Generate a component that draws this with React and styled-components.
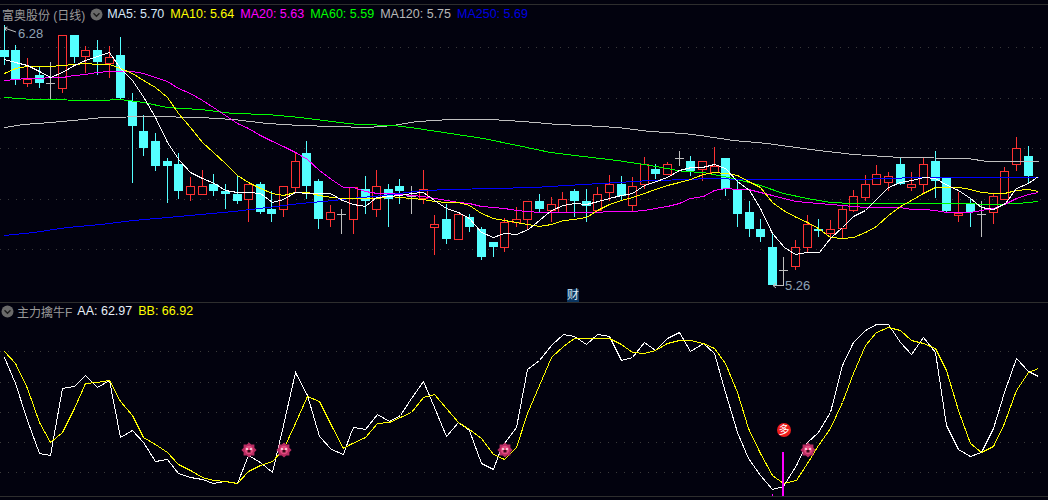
import React from "react";
import styled, { createGlobalStyle } from "styled-components";

const RED = "#ff3232";
const CYAN = "#54ffff";
const GRAY = "#c0c0c0";

// top, bottom, high, low, kind (r red, c cyan, g doji)
const candles = [
  [50, 57, 25, 65, "c"], [50, 79, 45, 85, "c"], [79, 83, 58, 87, "r"], [75, 83, 66, 88, "c"],
  [83, 83, 62, 100, "g"], [35, 88, 35, 93, "r"], [35, 57, 35, 63, "c"], [50, 56, 46, 73, "r"],
  [50, 62, 40, 75, "c"], [57, 63, 46, 78, "r"], [55, 98, 37, 100, "c"], [101, 126, 93, 183, "c"],
  [131, 148, 115, 156, "c"], [141, 166, 133, 171, "c"], [161, 166, 158, 203, "c"], [164, 191, 153, 199, "c"],
  [186, 194, 177, 201, "r"], [186, 194, 170, 195, "r"], [184, 191, 174, 196, "c"], [191, 194, 184, 209, "c"],
  [194, 201, 175, 204, "c"], [184, 199, 184, 222, "r"], [184, 212, 182, 214, "c"], [209, 214, 191, 222, "c"],
  [186, 209, 186, 217, "r"], [161, 187, 153, 192, "r"], [153, 186, 141, 199, "c"], [181, 219, 179, 229, "c"],
  [212, 219, 205, 227, "r"], [214, 214, 209, 234, "g"], [187, 219, 187, 234, "r"], [189, 201, 176, 214, "c"],
  [186, 209, 170, 217, "r"], [189, 199, 184, 227, "c"], [186, 191, 179, 204, "c"], [196, 196, 186, 214, "g"],
  [189, 198, 170, 204, "r"], [224, 227, 215, 255, "r"], [219, 239, 204, 244, "c"], [214, 239, 214, 239, "r"],
  [217, 227, 214, 232, "c"], [229, 257, 227, 260, "c"], [242, 247, 242, 257, "c"], [222, 247, 218, 252, "r"],
  [219, 222, 207, 227, "r"], [201, 219, 201, 229, "r"], [201, 209, 194, 212, "c"], [204, 210, 197, 222, "r"],
  [199, 212, 192, 212, "r"], [191, 201, 189, 217, "c"], [201, 206, 189, 222, "c"], [194, 210, 187, 210, "r"],
  [184, 192, 175, 201, "r"], [184, 196, 176, 201, "c"], [186, 205, 177, 212, "r"], [164, 184, 157, 189, "r"],
  [169, 174, 164, 179, "c"], [164, 174, 162, 174, "r"], [158, 158, 151, 166, "g"], [161, 171, 156, 176, "c"],
  [161, 169, 161, 181, "r"], [166, 172, 147, 172, "r"], [158, 189, 158, 196, "c"], [189, 214, 179, 227, "c"],
  [212, 229, 201, 237, "c"], [229, 237, 219, 242, "c"], [247, 285, 234, 285, "c"], [270, 270, 257, 285, "g"],
  [247, 266, 240, 270, "r"], [224, 247, 215, 252, "r"], [229, 231, 219, 237, "c"], [229, 233, 220, 240, "r"],
  [209, 228, 205, 238, "r"], [196, 210, 190, 212, "r"], [184, 197, 175, 201, "r"], [174, 184, 165, 184, "r"],
  [176, 182, 172, 191, "r"], [164, 184, 157, 185, "c"], [184, 187, 172, 191, "r"], [164, 184, 158, 193, "r"],
  [161, 181, 151, 198, "c"], [177, 211, 177, 213, "c"], [213, 215, 192, 222, "r"], [204, 212, 199, 227, "c"],
  [214, 214, 201, 237, "g"], [196, 212, 193, 224, "r"], [171, 199, 167, 199, "r"], [148, 164, 137, 171, "r"],
  [156, 176, 146, 183, "c"],
];

const ma5 = "4,59 15,62 27,65 39,71 50,77 62,72 74,65 85,60 97,56 109,52 120,68 132,80 144,98 155,117 167,142 179,160 190,172 202,178 214,183 225,190 237,192 248,192 260,193 272,202 283,199 295,192 307,193 318,193 330,193 342,200 353,204 365,206 376,197 388,196 400,195 411,193 423,192 434,200 446,208 458,212 469,218 481,232 493,237 504,233 516,234 528,229 539,220 551,210 563,205 574,203 586,204 598,201 609,198 621,195 632,193 644,185 656,181 667,177 679,170 691,167 702,167 714,164 725,168 737,181 749,190 760,208 772,233 784,247 795,254 807,252 819,252 830,238 842,227 853,216 865,210 877,198 888,187 900,182 912,180 923,177 935,178 947,185 958,190 970,198 981,207 993,209 1005,203 1016,188 1028,183 1038,176";
const ma10 = "4,73 15,68 27,66 39,66 50,66 62,65 74,64 85,63 97,64 109,64 120,68 132,73 143,80 155,87 167,97 178,113 190,127 202,142 213,152 225,163 237,175 248,182 260,188 272,193 283,195 295,192 307,192 319,195 331,197 343,198 353,198 365,198 377,198 389,196 400,197 411,198 423,199 434,201 446,202 458,202 469,205 481,213 493,218 504,220 516,222 527,224 539,226 551,224 563,220 574,219 586,217 597,210 609,204 621,200 632,197 644,193 655,189 667,185 679,182 690,179 703,174 714,172 725,173 737,175 748,181 760,187 772,202 783,210 796,217 807,222 818,228 830,237 842,238 853,237 865,232 876,226 888,215 900,206 911,200 923,193 935,187 946,187 958,187 970,189 981,192 993,193 1004,193 1016,190 1028,189 1038,191";
const ma20 = "4,80 15,79 27,78 39,78 50,77 62,77 74,75 85,74 97,72 109,71 120,71 132,71 143,73 155,77 167,81 178,88 190,93 202,100 213,107 225,115 237,123 248,128 260,135 272,141 283,146 295,152 307,159 319,170 331,179 343,187 353,187 365,191 377,193 389,193 400,194 411,195 423,196 434,198 446,200 458,202 469,203 481,206 493,207 504,208 516,210 527,211 539,212 551,212 563,212 574,212 586,212 597,212 609,211 621,211 632,211 644,210 655,208 667,206 679,203 690,198 703,196 714,190 725,188 737,189 748,189 760,192 772,195 783,198 796,201 807,202 818,203 830,204 842,205 853,206 865,207 876,207 888,207 900,207 911,209 923,209 935,210 946,212 958,212 970,212 981,210 993,208 1004,204 1016,198 1028,194 1038,192";
const ma60 = "4,97 33,99 100,100 120,99 143,102 167,107 200,109 233,113 267,114 300,117 347,123 360,124 393,125 417,128 450,133 483,138 517,145 550,152 583,156 617,160 650,165 683,171 703,172 733,178 760,185 783,193 807,198 830,202 853,203 900,203 933,203 958,203 993,204 1017,203 1038,201";
const ma120 = "4,127 23,124 50,122 83,119 103,117 150,116 200,117 233,119 267,123 300,125 333,126 367,127 393,125 417,121 450,119 490,119 523,121 557,124 583,125 617,127 650,131 683,133 700,135 733,140 767,143 810,149 853,154 900,157 967,158 987,161 1038,161";
const ma250 = "4,235 33,232 67,227 100,224 133,220 167,217 200,214 233,211 267,207 300,203 333,200 350,198 383,195 423,190 450,189 493,188 533,187 583,184 617,182 650,180 693,179 703,178 753,179 857,179 917,177 1038,177";

const aa = "4,357 15,383 27,420 39,453 50,455 62,388 74,386 85,375 97,387 109,380 120,437 132,430 143,442 155,461 167,459 178,473 190,477 202,479 213,483 225,481 237,483 248,455 260,462 272,472 283,425 295,372 307,395 319,436 331,449 343,454 350,434 353,427 365,429 377,414 389,421 400,415 411,398 423,381 434,407 446,436 458,422 469,430 481,463 493,469 498,455 504,443 516,427 527,369 539,360 551,345 563,334 574,336 586,344 597,334 609,336 621,360 632,357 644,342 655,350 667,338 679,332 690,351 703,343 714,353 725,392 737,432 748,458 760,475 772,489 783,486 796,465 807,442 818,432 830,412 842,365 853,342 865,330 876,324 888,324 900,342 911,354 923,337 935,352 946,425 958,449 970,456 981,452 993,428 1004,392 1016,358 1028,371 1038,376";
const bb = "4,351 15,363 27,388 39,422 50,442 62,432 74,408 85,383 97,382 109,380 120,401 132,415 143,437 155,444 167,452 178,464 190,470 202,477 213,480 225,481 237,483 248,471 260,465 272,461 283,449 295,423 307,396 319,401 331,425 343,448 350,444 365,437 377,423 389,422 400,417 411,412 423,397 434,394 446,408 458,422 469,429 481,438 493,454 504,459 516,447 527,413 539,385 551,357 563,346 574,338 586,338 597,338 609,338 621,344 632,352 644,353 655,350 667,343 679,340 690,340 703,343 714,348 725,363 737,392 748,428 760,453 772,475 783,483 796,480 807,463 818,445 830,428 842,402 853,373 865,345 876,332 888,327 900,330 911,340 923,343 935,348 946,370 958,410 970,443 981,452 993,446 1004,423 1016,390 1028,372 1038,368";

const priceGrid = [47, 98, 148, 199, 249];
const indicatorGrid = [351, 382, 412, 442, 472];
const flowers = [249, 284, 505, 808];

const GlobalStyle = createGlobalStyle`
  html, body {
    margin: 0;
    padding: 0;
    background: #02020e;
  }
`;

const Screen = styled.div`
  width: 1048px;
  height: 500px;
  padding-top: 4px;
  box-sizing: border-box;
  background: #02020e;
  display: flex;
  flex-direction: column;
  overflow: hidden;
  font-family: "Liberation Sans", "Noto Sans CJK SC", sans-serif;
`;

const Panel = styled.section`
  position: relative;
  height: ${(p) => p.$height}px;
  flex: none;
  display: flex;
  flex-direction: column;
  box-sizing: border-box;
  border-top: 1px solid #2e2e2e;
`;

const Footer = styled.div`
  flex: 1;
  border-top: 1px solid #2e2e2e;
`;

const Legend = styled.div`
  height: ${(p) => p.$height}px;
  flex: none;
  display: flex;
  align-items: center;
  white-space: nowrap;
  font-size: 12.5px;
`;

const Title = styled.span`
  color: #9a9a9a;
  font-size: 12px;
  margin: ${(p) => p.$margin};
`;

const Reading = styled.span`
  color: ${(p) => p.$color};
  margin-right: 6px;
`;

const Toggle = styled.svg`
  width: 13px;
  height: 13px;
  flex: none;
  margin: ${(p) => p.$margin};
`;

const Chart = styled.svg`
  display: block;
  flex: none;
  width: 1048px;
  height: ${(p) => p.$height}px;
`;

const FinanceTag = styled.span`
  position: absolute;
  left: 567px;
  bottom: 0;
  width: 12px;
  height: 13px;
  background: #0a3560;
  color: #d8e4f0;
  font-size: 12px;
  line-height: 13px;
  text-align: center;
`;

const PriceLabel = styled.text`
  fill: #8fa3b5;
  font-family: "Liberation Sans", sans-serif;
  font-size: 13px;
`;

const BadgeGlyph = styled.text`
  fill: #ffffff;
  font-family: "Noto Sans CJK SC", sans-serif;
  font-size: 11px;
  text-anchor: middle;
`;

function ToggleIcon({ margin }) {
  return (
    <Toggle $margin={margin} viewBox="0 0 13 13">
      <circle cx="6.5" cy="6.5" r="6" fill="#6a6a6a" />
      <path d="M3.5 5.2 L6.5 8.2 L9.5 5.2" fill="none" stroke="#1c1c1c" strokeWidth="1.4" />
    </Toggle>
  );
}

function GridLines({ rows }) {
  return rows.map((y) => (
    <line
      key={y}
      x1="0"
      x2="1048"
      y1={y + 0.5}
      y2={y + 0.5}
      stroke="#3a3a3a"
      strokeDasharray="1 7"
    />
  ));
}

function Candle({ index, data }) {
  const [top, bottom, high, low, kind] = data;
  const x = Math.round(3.8 + 11.636 * index);
  if (kind === "g") {
    return (
      <g stroke={GRAY} shapeRendering="crispEdges">
        <line x1={x + 0.5} x2={x + 0.5} y1={high} y2={low} />
        <line x1={x - 4} x2={x + 5} y1={top + 0.5} y2={top + 0.5} />
      </g>
    );
  }
  if (kind === "r") {
    return (
      <g stroke={RED} fill="none" shapeRendering="crispEdges">
        <line x1={x + 0.5} x2={x + 0.5} y1={high} y2={top} />
        <line x1={x + 0.5} x2={x + 0.5} y1={bottom} y2={low} />
        <rect x={x - 3.5} y={top + 0.5} width="8" height={bottom - top} />
      </g>
    );
  }
  return (
    <g shapeRendering="crispEdges">
      <line x1={x + 0.5} x2={x + 0.5} y1={high} y2={low} stroke={CYAN} />
      <rect x={x - 4} y={top} width="9" height={bottom - top} fill={CYAN} />
    </g>
  );
}

function Trace({ points, color }) {
  return (
    <polyline
      points={points}
      transform="translate(0.5 0.5)"
      fill="none"
      stroke={color}
      strokeWidth="1"
      shapeRendering="crispEdges"
    />
  );
}

function Flower({ x, y }) {
  const spikes = [];
  for (let i = 0; i < 16; i++) {
    const r = i % 2 === 0 ? 7.6 : 5.8;
    const a = (Math.PI * i) / 8;
    spikes.push(`${(x + r * Math.sin(a)).toFixed(1)},${(y - r * Math.cos(a)).toFixed(1)}`);
  }
  return (
    <g>
      <polygon points={spikes.join(" ")} fill="#b82c62" />
      <circle cx={x} cy={y} r="4.2" fill="#e24c80" />
      <rect x={x - 3} y={y - 2} width="2" height="2" fill="#f6c4d2" />
      <rect x={x + 1} y={y - 2} width="2" height="2" fill="#f6c4d2" />
      <rect x={x - 1.5} y={y} width="3" height="2.5" fill="#3a0a18" />
    </g>
  );
}

function App() {
  return (
    <>
      <GlobalStyle />
      <Screen>
        <Panel $height={298}>
          <Legend $height={18}>
            <Title $margin="0 0 0 2px">富奥股份 (日线)</Title>
            <ToggleIcon margin="0 4px 0 5px" />
            <Reading $color="#d8e8f8">MA5: 5.70</Reading>
            <Reading $color="#ffff00">MA10: 5.64</Reading>
            <Reading $color="#ff00ff">MA20: 5.63</Reading>
            <Reading $color="#00ff00">MA60: 5.59</Reading>
            <Reading $color="#b8b8b8">MA120: 5.75</Reading>
            <Reading $color="#0000e0">MA250: 5.69</Reading>
          </Legend>
          <Chart $height={279} viewBox="0 23 1048 279">
            <GridLines rows={priceGrid} />
            {candles.map((c, i) => (
              <Candle key={i} index={i} data={c} />
            ))}
            <Trace points={ma120} color={GRAY} />
            <Trace points={ma60} color="#00ff00" />
            <Trace points={ma250} color="#0000ff" />
            <Trace points={ma20} color="#ff00ff" />
            <Trace points={ma10} color="#ffff00" />
            <Trace points={ma5} color="#ffffff" />
            <path d="M4.5 28 L16 32 M4.5 28 L7.5 27 M4.5 28 L6.5 31" fill="none" stroke={GRAY} />
            <PriceLabel x="18" y="38">6.28</PriceLabel>
            <path d="M773 285.5 L784 285.5 M773 285.5 L776 283 M773 285.5 L776 288" fill="none" stroke={GRAY} />
            <PriceLabel x="785" y="290">5.26</PriceLabel>
          </Chart>
          <FinanceTag>财</FinanceTag>
        </Panel>
        <Panel $height={194}>
          <Legend $height={16}>
            <ToggleIcon margin="0 3px 0 1px" />
            <Title $margin="0 5px 0 0">主力擒牛F</Title>
            <Reading $color="#e8f0f8">AA: 62.97</Reading>
            <Reading $color="#ffff00">BB: 66.92</Reading>
          </Legend>
          <Chart $height={177} viewBox="0 319 1048 177">
            <GridLines rows={indicatorGrid} />
            <Trace points={aa} color="#ffffff" />
            <Trace points={bb} color="#ffff00" />
            {flowers.map((x) => (
              <Flower key={x} x={x} y={450} />
            ))}
            <rect x="782" y="452" width="2" height="44" fill="#ff00ff" />
            <rect x="772" y="494" width="1" height="2" fill="#ff00ff" />
            <circle cx="784" cy="430" r="7" fill="#ee1c1c" />
            <BadgeGlyph x="784" y="434">多</BadgeGlyph>
          </Chart>
        </Panel>
        <Footer />
      </Screen>
    </>
  );
}

export default App;
